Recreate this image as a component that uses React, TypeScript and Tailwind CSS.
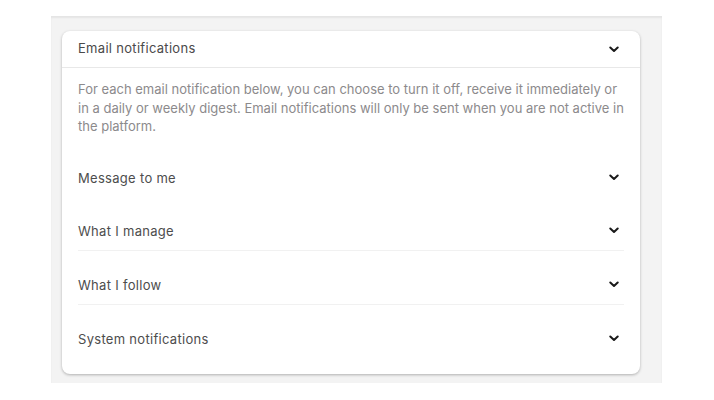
import { ReactNode } from "react"

function Chevron() {
  return (
    <svg width="10" height="7" viewBox="0 0 10 7" className="shrink-0">
      <polyline points="1.3,1.5 5,5 8.7,1.5" fill="none" stroke="#1a1a1a" strokeWidth="2" strokeLinecap="round" strokeLinejoin="round" />
    </svg>
  )
}

function Row({ label, divider }: { label: ReactNode; divider?: boolean }) {
  return (
    <div className={`flex items-center justify-between pt-[25px] pb-[10px] ${divider ? "border-b border-[#f1f1f1]" : ""}`}>
      <span className="text-[13px] leading-[18px] tracking-[0.3px] text-[#4d4d4d]">{label}</span>
      <span className="pr-[5px]">
        <Chevron />
      </span>
    </div>
  )
}

export default function App() {
  return (
    <div className="w-[714px] h-[400px] bg-white pt-[16px] pl-[51px]" style={{ fontFamily: "Inter, 'Open Sans', sans-serif" }}>
      <div className="w-[611px] h-[367px] bg-[#f3f3f3] pt-[15px] pl-[11px] shadow-[inset_0_2px_2px_rgba(0,0,0,0.06)]">
        <div className="w-[578px] rounded-lg bg-white shadow-[0_1px_3px_rgba(0,0,0,0.28)]">
          {/* Header */}
          <div className="flex h-[37px] items-center justify-between border-b border-[#e8e8e8] px-4">
            <span className="text-[13px] tracking-[0.3px] text-[#4a4a4a]">Email notifications</span>
            <span className="pr-[5px]">
              <Chevron />
            </span>
          </div>

          <div className="px-4 pt-[12px] pb-4">
            <p className="mb-[8px] text-[13px] leading-[18.5px] text-[#8c8a8c]">
              For each email notification below, you can choose to turn it off, receive it immediately or in a daily or
              weekly digest. Email notifications will only be sent when you are not active in the platform.
            </p>
            <Row label="Message to me" />
            <Row label="What I manage" divider />
            <Row label="What I follow" divider />
            <Row label="System notifications" />
          </div>
        </div>
      </div>
    </div>
  )
}
